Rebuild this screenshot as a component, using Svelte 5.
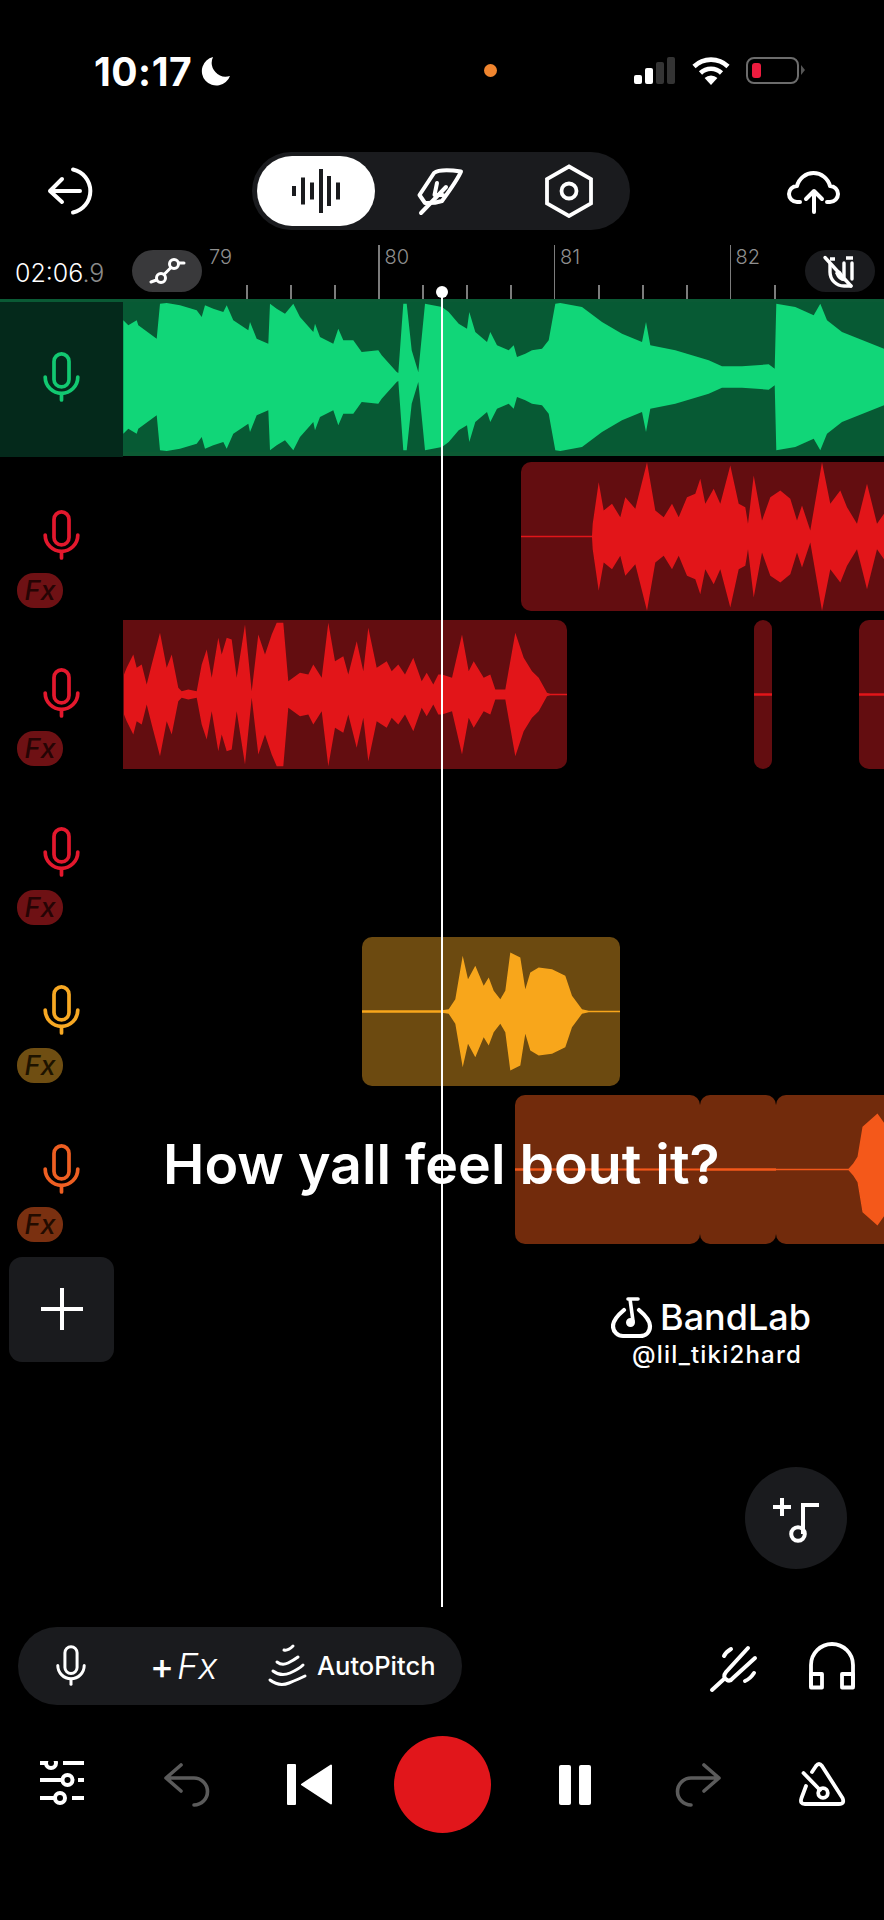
<script>
  // waveform envelopes were read off the 3x crops: [zoomX, zoomY of upper edge]
  const z3 = (list, c) => list.map(([x, y]) => [x / 3, (c - y) / 3]);
  const z4 = (list, c) => list.map(([x, y]) => [442 + x / 3, (c - y) / 3]);

  const shape = (pts, cy) => {
    const top = pts.map(([x, h]) => `${x.toFixed(1)},${(cy - h).toFixed(1)}`);
    const bottom = [...pts].reverse().map(([x, h]) => `${x.toFixed(1)},${(cy + h).toFixed(1)}`);
    return [...top, ...bottom].join(" ");
  };

  const greenWave = [
    ...z3([[370,90],[385,105],[410,90],[415,105],[470,145],[480,40],[500,38],[540,45],[590,60],[605,80],[615,45],[640,55],[670,65],[680,45],[700,90],[745,120],[750,95],[770,145],[805,160],[810,40],[830,55],[855,70],[880,40],[900,80],[940,125],[945,100],[960,140],[1000,160],[1015,115],[1030,150],[1060,150],[1085,185],[1135,180],[1145,195],[1190,245],[1195,248],[1210,40],[1220,40],[1235,180],[1255,245],[1275,40],[1326,50]], 260),
    ...z4([[20,65],[50,100],[75,115],[82,65],[100,125],[135,155],[145,125],[165,165],[200,180],[215,165],[225,200],[250,190],[270,180],[300,175],[320,150],[340,40],[355,38],[420,50],[480,95],[540,130],[600,155],[612,95],[625,165],[700,180],[800,210],[840,228],[900,228],[980,222],[998,235],[1003,40],[1060,50],[1115,75],[1135,40],[1155,90],[1200,125],[1326,175]], 260),
  ];

  const redWaveA = z4([[237,736],[450,736],[452,700],[470,575],[485,660],[510,640],[535,680],[550,620],[580,655],[615,515],[640,660],[665,680],[690,640],[710,680],[735,620],[760,610],[775,565],[790,640],[815,595],[835,640],[865,525],[890,640],[910,650],[918,700],[935,555],[960,690],[985,620],[1015,600],[1045,625],[1065,690],[1080,645],[1105,720],[1140,515],[1165,640],[1195,600],[1215,650],[1245,700],[1275,580],[1305,700],[1326,670]], 738);

  const redWaveB = [
    ...z3([[372,1150],[380,1130],[400,1090],[410,1130],[425,1120],[440,1180],[455,1120],[480,1025],[500,1130],[515,1090],[535,1190],[545,1200],[565,1195],[590,1200],[605,1120],[620,1075],[635,1160],[655,1040],[665,1090],[680,1040],[695,1045],[710,1160],[735,1000],[755,1200],[775,1030],[795,1090],[815,1030],[830,995],[850,995],[865,1170],[900,1145],[925,1150],[940,1120],[965,1160],[985,995],[1005,1110],[1030,1095],[1045,1150],[1070,1050],[1090,1140],[1105,1010],[1130,1130],[1160,1110],[1175,1140],[1195,1120],[1215,1150],[1240,1100],[1265,1170],[1280,1145],[1300,1180],[1315,1150],[1326,1150]], 1210),
    ...z4([[30,1160],[60,1030],[80,1140],[95,1110],[125,1160],[145,1150],[160,1195],[190,1195],[220,1025],[245,1100],[270,1140],[290,1160],[315,1205],[325,1208],[375,1208]], 1210),
  ];

  const line = (a, b) => [[a, 1.2], [b, 1.2]];

  const amberWave = [
    [362, 1.2], [442, 1.2],
    ...z4([[20,325],[40,295],[62,165],[78,235],[100,195],[125,255],[140,230],[155,270],[175,295],[190,270],[205,155],[235,170],[250,265],[265,215],[290,200],[330,205],[370,225],[390,285],[420,325],[440,330],[535,330]], 332),
  ];

  const orangeWave = [
    [515, 1.2],
    ...z4([[1218,806],[1232,790],[1245,770],[1260,680],[1305,640],[1326,670]], 808),
  ];

  const tracks = [
    { tone: "red", clips: [{ left: 521, width: 363, wave: redWaveA, cut: true }] },
    {
      tone: "red",
      clips: [
        { left: 123, width: 444, wave: redWaveB, flat: true },
        { left: 754, width: 18, wave: line(754, 772), pill: true },
        { left: 859, width: 25, wave: line(859, 884), cut: true },
      ],
    },
    { tone: "red", clips: [] },
    { tone: "amber", clips: [{ left: 362, width: 258, wave: amberWave }] },
    {
      tone: "orange",
      clips: [
        { left: 515, width: 185, wave: orangeWave },
        { left: 700, width: 75.5, wave: line(700, 776) },
        { left: 775.5, width: 108.5, wave: orangeWave, cut: true },
      ],
    },
  ];

  const bars = [79, 80, 81, 82];
  const minors = [246, 290, 334, 422, 466, 510, 598, 642, 686, 774];
</script>

{#snippet mic()}
  <svg class="mic" viewBox="0 0 37 50" fill="none" stroke="currentColor" stroke-width="3.7" stroke-linecap="round">
    <rect x="11" y="1.9" width="15" height="33" rx="7.5" />
    <path d="M2.2 25a16.3 16.3 0 0 0 32.6 0" />
    <path d="M18.5 42v6" />
  </svg>
{/snippet}

{#snippet undoArrow()}
  <path d="M5 18H33A13.5 13.5 0 0 1 33 45M20 5 5 18 20 31" />
{/snippet}

<div class="page">
  <header class="status">
    <span class="clock">10:17</span>
    <svg class="moon" viewBox="0 0 30 30"><path d="M12 1A14.5 14.5 0 1 0 29 20 14 14 0 0 1 12 1Z" fill="#fff" /></svg>
    <span class="dot"></span>
    <div class="signal">
      <i style="height:9px"></i>
      <i style="height:16px"></i>
      <i class="off" style="height:22px"></i>
      <i class="off" style="height:27px"></i>
    </div>
    <svg class="wifi" viewBox="0 0 38 28" fill="none" stroke="#fff" stroke-width="4.6">
      <path d="M2 9.5a24.5 24.5 0 0 1 34 0" />
      <path d="M8.5 16a15.2 15.2 0 0 1 21 0" />
      <path d="M19 28 12.6 21a9.2 9.2 0 0 1 12.8 0Z" fill="#fff" stroke="none" />
    </svg>
    <div class="battery"><span></span></div>
    <span class="nub"></span>
  </header>

  <nav class="toolbar">
    <svg class="exit" viewBox="0 0 50 50" fill="none" stroke="#fff" stroke-width="4" stroke-linecap="round" stroke-linejoin="round">
      <path d="M4 25H34M16 13 4 25 16 36" />
      <path d="M27 3.5A22 22 0 0 1 27 46.5" />
    </svg>
    <div class="modes">
      <div class="mode active">
        <svg width="52" height="48" viewBox="0 0 52 48" fill="#1a1b1e">
          <rect x="2" y="19" width="4" height="10" />
          <rect x="11" y="10.5" width="4" height="27" />
          <rect x="20" y="15.5" width="4" height="17" />
          <rect x="29" y="2" width="4" height="44" />
          <rect x="37" y="9" width="4" height="30" />
          <rect x="46" y="15.5" width="4" height="17" />
        </svg>
      </div>
      <div class="mode feather">
        <svg width="56" height="56" viewBox="17 10 52 56" fill="none" stroke="#fff" stroke-width="4" stroke-linecap="round" stroke-linejoin="round">
          <path d="M21.5 42 36 20Q42 15.5 63 18.5 60 26 44 48 36 50.5 27 50Z" />
          <path d="M23 60 48 34M36.5 42 39 30M37 42H45" />
        </svg>
      </div>
      <div class="mode hex">
        <svg width="48" height="54" viewBox="0 0 48 54" fill="none" stroke="#fff" stroke-width="3.8">
          <path d="M24 2.5 46 15V39.5L24 52 2 39.5V15Z" />
          <circle cx="24" cy="27" r="7.5" />
        </svg>
      </div>
    </div>
    <svg class="cloud" viewBox="0 0 54 46" fill="none" stroke="#fff" stroke-width="4" stroke-linecap="round" stroke-linejoin="round">
      <path d="M13 34H10A8 8 0 0 1 10 18 17 17 0 0 1 43 18 8 8 0 0 1 43 34H40" />
      <path d="M27 44V24M19 31 27 23 35 31" />
    </svg>
  </nav>

  <section class="ruler">
    {#each bars as bar, i}
      <span class="bar-no" style="left:{209 + i * 175.5}px">{bar}</span>
      {#if i > 0}<span class="major" style="left:{202.5 + i * 175.7}px"></span>{/if}
    {/each}
    {#each minors as x}
      <span class="minor" style="left:{x}px"></span>
    {/each}
    <span class="time">02:06<em>.9</em></span>
    <div class="chip dark">
      <svg width="70" height="42" viewBox="0 0 70 42" fill="none" stroke="#fff" stroke-width="3" stroke-linecap="round">
        <circle cx="29" cy="28" r="4.5" />
        <circle cx="42" cy="14" r="4.5" />
        <path d="M19 32 24.5 30M32 24.5 39 17.5M46.5 13H52" />
      </svg>
    </div>
    <div class="chip magnet">
      <svg width="70" height="42" viewBox="0 0 70 42" fill="none" stroke="#fff" stroke-width="3.4" stroke-linecap="round">
        <path d="M20 7.5 46 36" />
        <path d="M25 9H30M41 8H48" stroke-linecap="butt" />
        <path d="M25 14V22A14 14 0 0 0 39 36H46M47 13V29M39 13V27" />
        <path d="M30 23Q35 17 38 26L42 31Q34 33 30 23Z" fill="#fff" stroke="none" />
      </svg>
    </div>
  </section>

  <section class="track lead">
    <div class="head">{@render mic()}</div>
    <div class="lane">
      <svg viewBox="123 0 761 150" preserveAspectRatio="none">
        <polygon points={shape(greenWave, 75)} fill="#11d678" />
      </svg>
    </div>
  </section>

  {#each tracks as track}
    <section class="track {track.tone}">
      <div class="head">
        {@render mic()}
        <span class="fx">Fx</span>
      </div>
      {#each track.clips as clip}
        <div
          class="clip"
          class:pill={clip.pill}
          class:cut={clip.cut}
          class:flat={clip.flat}
          style="left:{clip.left}px;width:{clip.width}px"
        >
          <svg viewBox="{clip.left} 0 {clip.width} 149" preserveAspectRatio="none">
            <polygon points={shape(clip.wave, 74.5)} />
          </svg>
        </div>
      {/each}
    </section>
  {/each}

  <button class="add" aria-label="Add track">
    <svg width="42" height="42" viewBox="0 0 42 42" stroke="#fff" stroke-width="4"><path d="M21 0V42M0 21H42" /></svg>
  </button>

  <div class="actions">
    <div class="rec-tools">
      <span class="tool-mic">{@render mic()}</span>
      <span class="plus-fx">+<em>Fx</em></span>
      <svg class="pitch" viewBox="0 0 42 46" fill="none" stroke="#fff" stroke-width="3" stroke-linecap="round">
        <path d="M3 37Q12 44 22 40T38 33" />
        <path d="M6 28Q14 34 23 30T36 22" />
        <path d="M10 19Q15 23 21 20T31 14" />
        <path d="M17 7Q21 8 26 3" />
      </svg>
      <span class="pitch-label">AutoPitch</span>
    </div>
    <svg class="fork" viewBox="0 0 60 56" fill="none" stroke="#fff" stroke-width="4" stroke-linecap="round" stroke-linejoin="round">
      <path d="M12 52 24 41" />
      <path d="M48 10 26 34Q22 39 27 42 30 44 33 40L55 20" />
      <path d="M24 18Q26 14 31 11M45 43Q50 41 54 35" />
    </svg>
    <svg class="phones" viewBox="0 0 48 50" fill="none" stroke="#fff" stroke-width="3.8" stroke-linejoin="round">
      <path d="M3 46V24A21 21 0 0 1 45 24V46" />
      <path d="M3 33H14V46.5H3ZM34 33H45V46.5H34Z" />
    </svg>
  </div>

  <div class="transport">
    <svg width="46" height="48" viewBox="39 1765 46 48" fill="none" stroke="#fff" stroke-width="4">
      <path d="M40 1767H45M63 1767H84M40 1784H62M78 1784H84M40 1802H55M72 1802H84" />
      <circle cx="51" cy="1767" r="5" />
      <circle cx="67.5" cy="1784" r="5" />
      <circle cx="60" cy="1802" r="5" />
    </svg>
    <svg width="52" height="50" viewBox="0 0 52 50" fill="none" stroke="#5b5b5b" stroke-width="3.6" stroke-linecap="round" stroke-linejoin="round">
      {@render undoArrow()}
    </svg>
    <svg width="46" height="41" viewBox="0 0 46 41" fill="#fff" stroke="#fff" stroke-width="2" stroke-linejoin="round">
      <rect x="1" y="1" width="7" height="39" />
      <path d="M44 1.5V39.5L15 20.5Z" />
    </svg>
    <span class="record"></span>
    <div class="pause"><i></i><i></i></div>
    <svg class="redo" width="52" height="50" viewBox="0 0 52 50" fill="none" stroke="#5b5b5b" stroke-width="3.6" stroke-linecap="round" stroke-linejoin="round">
      {@render undoArrow()}
    </svg>
    <svg width="48" height="46" viewBox="799 1762 48 46" fill="none" stroke="#fff" stroke-width="3.8" stroke-linecap="round" stroke-linejoin="round">
      <path d="M807 1786 802.5 1798Q800.5 1804 806 1804H840Q846 1804 843.5 1798L823 1766Q820 1762 817 1766L813 1772" />
      <path d="M804.5 1773 821 1790" />
      <circle cx="824" cy="1793" r="4.8" />
    </svg>
  </div>

  <div class="playhead"></div>
  <p class="caption">How yall feel bout it?</p>

  <div class="mark">
    <div class="brand">
      <svg width="42" height="44" viewBox="0 0 42 44" fill="none" stroke="#fff" stroke-width="4.2" stroke-linecap="round" stroke-linejoin="round">
        <path d="M13 15C7 20 2 25 2 31 2 37 7 41 12 41H29C35 41 39 37 39 31 39 25 34 20 28 15" />
        <path d="M17 4H27M19 4 22 26" stroke-width="3.6" />
        <circle cx="19.5" cy="27.5" r="3" fill="#fff" stroke-width="3" />
      </svg>
      <span>BandLab</span>
    </div>
    <small>@lil_tiki2hard</small>
  </div>

  <button class="new-clip" aria-label="Add music">
    <svg width="102" height="102" viewBox="745 1467 102 102" fill="none" stroke="#fff" stroke-width="4">
      <path d="M782 1498V1516M773 1507H791" />
      <path d="M803 1534V1505H819" />
      <circle cx="798" cy="1534" r="6.8" />
    </svg>
  </button>
</div>

<style>
  :global(body) {
    background: #000;
  }

  .page {
    position: relative;
    width: 884px;
    height: 1920px;
    overflow: hidden;
    background: #000;
    color: #fff;
    font-family: Inter, "Liberation Sans", sans-serif;
  }

  /* status bar */
  .status {
    height: 152px;
    box-sizing: border-box;
    padding: 49px 0 0 94px;
    display: flex;
    align-items: flex-start;
  }

  .clock {
    font-size: 39px;
    font-weight: 700;
    line-height: 46px;
    letter-spacing: 0.5px;
  }

  .moon {
    width: 30px;
    height: 30px;
    margin: 7px 0 0 9px;
  }

  .dot {
    width: 13px;
    height: 13px;
    border-radius: 50%;
    background: #f0852f;
    margin: 15px 0 0 253px;
  }

  .signal {
    height: 27px;
    margin: 8px 0 0 137px;
    display: flex;
    align-items: flex-end;
    gap: 3.5px;
  }

  .signal i {
    width: 7.5px;
    border-radius: 2px;
    background: #fff;
  }

  .signal i.off {
    background: #343434;
  }

  .wifi {
    width: 38px;
    height: 28px;
    margin: 8px 0 0 17px;
  }

  .battery {
    width: 53px;
    height: 27px;
    box-sizing: border-box;
    margin: 8px 0 0 16px;
    padding: 4px;
    border: 2px solid #6c6c6c;
    border-radius: 8px;
  }

  .battery span {
    display: block;
    width: 9px;
    height: 100%;
    border-radius: 3px;
    background: #ee1c3f;
  }

  .nub {
    width: 0;
    height: 0;
    margin: 16px 0 0 2px;
    border-left: 4px solid #555;
    border-top: 5px solid transparent;
    border-bottom: 5px solid transparent;
  }

  /* top toolbar */
  .toolbar {
    height: 78px;
    padding-left: 46px;
    display: flex;
    align-items: center;
  }

  .exit {
    width: 50px;
    height: 50px;
  }

  .modes {
    width: 378px;
    height: 78px;
    margin-left: 156px;
    box-sizing: border-box;
    padding: 4px 0 4px 5px;
    display: flex;
    border-radius: 39px;
    background: #1a1b1e;
  }

  .mode {
    display: flex;
    align-items: center;
    justify-content: center;
  }

  .mode.active {
    width: 118px;
    border-radius: 35px;
    background: #fff;
  }

  .mode.feather {
    width: 132px;
  }

  .mode.hex {
    width: 123px;
  }

  .cloud {
    width: 54px;
    height: 46px;
    margin-left: 157px;
  }

  /* ruler */
  .ruler {
    position: relative;
    height: 54px;
    margin-top: 15px;
    display: flex;
    align-items: center;
  }

  .time {
    margin: 0 0 0 15px;
    width: 117px;
    font-size: 25px;
    font-weight: 300;
    line-height: 30px;
    position: relative;
    top: 1px;
  }

  .time em {
    font-style: normal;
    color: #8a8a8a;
  }

  .chip {
    width: 70px;
    height: 42px;
    border-radius: 21px;
    position: relative;
    top: -1px;
  }

  .chip.dark {
    background: #39393b;
  }

  .chip.magnet {
    background: #1a1b1e;
    margin-left: auto;
    margin-right: 9px;
  }

  .bar-no {
    position: absolute;
    top: 0;
    font-size: 20px;
    font-weight: 300;
    line-height: 24px;
    color: #8f8f8f;
  }

  .major,
  .minor {
    position: absolute;
    bottom: 0;
    width: 1.5px;
    background: #7c7c7c;
  }

  .major {
    top: 0;
  }

  .minor {
    height: 14px;
  }

  /* tracks */
  .track {
    position: relative;
    height: 158.4px;
  }

  .track.lead {
    height: 158px;
    box-sizing: border-box;
    display: flex;
    border-top: 3px solid #0a5a35;
    color: #12c971;
  }

  .head {
    width: 123px;
    box-sizing: border-box;
    padding-top: 53px;
    position: relative;
  }

  .track.lead .head {
    height: 155px;
    padding-top: 50px;
    background: #04291b;
  }

  .mic {
    display: block;
    width: 37px;
    height: 50px;
    margin-left: 43px;
  }

  .fx {
    position: absolute;
    left: 17px;
    top: 116px;
    width: 46px;
    height: 35px;
    border-radius: 17px;
    font-size: 27px;
    font-weight: 500;
    font-style: italic;
    line-height: 35px;
    text-align: center;
    color: #250404;
  }

  .lane {
    flex: 1;
    height: 150px;
    background: #075a34;
    border-bottom: 4px solid #0b5a33;
  }

  .lane svg,
  .clip svg {
    display: block;
    width: 100%;
    height: 100%;
  }

  .clip {
    position: absolute;
    top: 4.5px;
    height: 149px;
    overflow: hidden;
    border-radius: 10px;
  }

  .clip.cut {
    border-radius: 10px 0 0 10px;
  }

  .clip.flat {
    border-radius: 0 10px 10px 0;
  }

  .clip.pill {
    border-radius: 9px;
  }

  .red { color: #e3182d; }
  .red .fx { background: #6e1114; }
  .red .clip { background: #630d10; }
  .red polygon { fill: #e21519; }

  .amber { color: #f7a823; }
  .amber .fx { background: #6f4e12; color: #1d1300; }
  .amber .clip { background: #6c4a10; }
  .amber polygon { fill: #f8a61b; }

  .orange { color: #ee5f22; }
  .orange .fx { background: #7a3010; color: #220b00; }
  .orange .clip { background: #722b0c; }
  .orange polygon { fill: #f4581a; }

  .add {
    display: flex;
    align-items: center;
    justify-content: center;
    width: 105px;
    height: 105px;
    margin: 8px 0 0 9px;
    padding: 0;
    border: 0;
    border-radius: 13px;
    background: #1a1b1e;
  }

  /* lower action row */
  .actions {
    height: 78px;
    margin-top: 265px;
    padding-left: 18px;
    display: flex;
    align-items: center;
  }

  .rec-tools {
    width: 444px;
    height: 78px;
    display: flex;
    align-items: center;
    border-radius: 39px;
    background: #1a1b1e;
  }

  .tool-mic {
    width: 30px;
    margin-left: 38px;
    color: #fff;
  }

  .tool-mic :global(.mic) {
    width: 30px;
    height: 41px;
    margin: 0;
  }

  .plus-fx {
    margin-left: 64px;
    font-size: 36px;
    font-weight: 500;
    line-height: 40px;
    width: 65px;
    white-space: nowrap;
  }

  .plus-fx em {
    font-weight: 300;
    margin-left: 3px;
  }

  .pitch {
    width: 42px;
    height: 46px;
    margin-left: 52px;
  }

  .pitch-label {
    margin-left: 8px;
    font-size: 25.5px;
    font-weight: 500;
    line-height: 30px;
  }

  .fork {
    width: 60px;
    height: 56px;
    margin-left: 238px;
  }

  .phones {
    width: 48px;
    height: 50px;
    margin-left: 48px;
  }

  /* transport */
  .transport {
    height: 98px;
    margin-top: 31px;
    display: grid;
    grid-template-columns: 124px 126px 120px 144px 122px 124px 124px;
    align-items: center;
    justify-items: center;
  }

  .record {
    width: 97px;
    height: 97px;
    border-radius: 50%;
    background: #e1161b;
  }

  .pause {
    display: flex;
    gap: 8px;
  }

  .pause i {
    width: 12px;
    height: 40px;
    border-radius: 2px;
    background: #fff;
  }

  .redo {
    transform: scaleX(-1);
  }

  /* overlays */
  .playhead {
    position: absolute;
    left: 440.5px;
    top: 291px;
    width: 2.5px;
    height: 1316px;
    background: #fff;
  }

  .playhead::before {
    content: "";
    position: absolute;
    left: -5px;
    top: -5px;
    width: 12px;
    height: 12px;
    border-radius: 50%;
    background: #fff;
  }

  .caption {
    position: absolute;
    left: 163px;
    top: 1130px;
    margin: 0;
    font-size: 55.5px;
    font-weight: 600;
    line-height: 68px;
    white-space: nowrap;
  }

  .mark {
    position: absolute;
    left: 611px;
    top: 1295px;
    width: 206px;
  }

  .brand {
    display: flex;
    align-items: center;
    gap: 7px;
  }

  .brand span {
    font-size: 36px;
    line-height: 44px;
    font-weight: 500;
  }

  .mark small {
    display: block;
    margin: 3px 0 0 21px;
    font-size: 24px;
    letter-spacing: 1.2px;
    line-height: 26px;
    font-weight: 500;
    white-space: nowrap;
  }

  .new-clip {
    position: absolute;
    left: 745px;
    top: 1467px;
    width: 102px;
    height: 102px;
    padding: 0;
    border: 0;
    border-radius: 50%;
    background: #1a1b1e;
  }
</style>
